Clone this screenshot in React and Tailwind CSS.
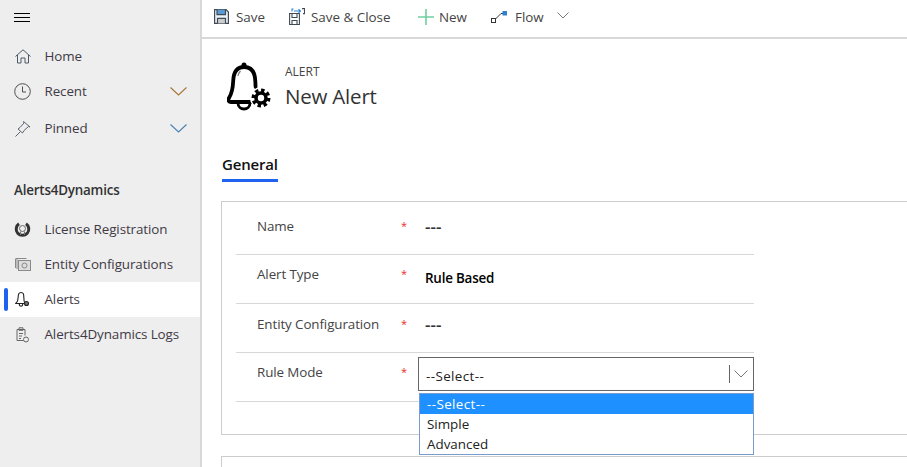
const font = { fontFamily: '"Open Sans","Noto Sans",sans-serif' };

function NavItem({ icon, label, chevron, active, h = "h-[35px]" }) {
  return (
    <div className={`relative flex items-center ${h} pl-[14px] pr-[13px] ${active ? "bg-white" : ""}`}>
      {active && <div className="absolute left-[4px] top-[6px] h-[23px] w-[4px] rounded-sm bg-[#1f62ef]" />}
      <div className="flex w-[17px] shrink-0 justify-center">{icon}</div>
      <span className="ml-[13.5px] flex-1 text-[13.4px] tracking-[-0.1px] text-[#3f3a45]">{label}</span>
      {chevron && (
        <svg width="17" height="9" viewBox="0 0 17 9" fill="none" stroke={chevron} strokeWidth="1.1"><path d="M0.5 0.5 8.5 8 16.5 0.5" /></svg>
      )}
    </div>
  );
}

const I = {
  home: (
    <svg width="16" height="15" viewBox="0 0 16 15" fill="none" stroke="#4c5a68" strokeWidth="1"><path d="M0.5 7.5 8 0.8 15.5 7.500M2.500 6v8h3.500V9h4v5h3.500V6" /></svg>
  ),
  clock: (
    <svg width="17" height="17" viewBox="0 0 17 17" fill="none" stroke="#4c5050" strokeWidth="1"><circle cx="8.500" cy="8.500" r="7.800" /><path d="M8.500 3.500v5.500h3.500" /></svg>
  ),
  pin: (
    <svg width="16" height="16" viewBox="0 0 16 16" fill="none" stroke="#5c6670" strokeWidth="1"><path d="M0.500 15.500 5.500 10.500M3 8l2-1.500 4-4.500-.5-1.500L15 6l-1.500-.5L9 9.500 7.500 12z" /></svg>
  ),
  license: (
    <svg width="17" height="15" viewBox="0 0 17 15" fill="none"><path d="M5 1.800A6.300 6.300 0 1 0 12 1.800" stroke="#333" strokeWidth="3" /><circle cx="8.500" cy="6.500" r="3" stroke="#666" strokeWidth="1" /><path d="M6.500 9.500v3.500M10.500 9.500v3.500" stroke="#777" /></svg>
  ),
  entity: (
    <svg width="16" height="13" viewBox="0 0 16 13" fill="none" stroke="#8a8a8a" strokeWidth="1"><rect x="3.500" y="2.500" width="12" height="10" fill="#ddd" /><path d="M0.500 1v9M0.500 .5h11M2 1v10" /><circle cx="9.500" cy="7.500" r="2.500" /></svg>
  ),
  bell: (
    <svg width="15" height="17" viewBox="0 0 15 17" fill="none" stroke="#222" strokeWidth="1.1"><path d="M6 1.500C3.800 1.500 3.200 3.500 3.200 6c0 3-.8 5-2.400 6.500h9.200C9 11 8.800 9 8.800 6c0-2.500-.3-4.500-2.800-4.500zM4.300 13c0 3 3.400 3 3.400 0" /><circle cx="11.500" cy="12.500" r="2" fill="#777" /></svg>
  ),
  logs: (
    <svg width="13" height="16" viewBox="0 0 13 16" fill="none" stroke="#666" strokeWidth="1"><path d="M7.500 13.500h-6.500v-11h8v6M3 .8h4v2.500h-4zM3 6.500h4M3 9h3M3 11.500h2" /><circle cx="10" cy="12.500" r="2.500" /></svg>
  ),
};

function Row({ label, h, pt, children }) {
  return (
    <div className={`flex ${h} ${pt} border-b border-[#d8d8d8]`}>
      <div className="w-[165px] pl-[21px] text-[13.4px] leading-[20px] tracking-[-0.1px] text-[#444]">{label}</div>
      <div className="w-[17px] text-[11px] leading-[20px] text-[#e6302b]">*</div>
      {children}
    </div>
  );
}

function Btn({ icon, label, cls }) {
  return (
    <div className={`flex items-center ${cls}`}>
      {icon}
      <span className="text-[13.4px] text-[#444]">{label}</span>
    </div>
  );
}

export default function App() {
  return (
    <div style={font} className="flex h-[467px] w-[907px] overflow-hidden bg-white">
      <aside className="w-[200px] shrink-0 bg-[#eeeeee]">
        <div className="flex h-[35px] items-center pl-[14px]">
          <div className="flex h-[9px] w-[16px] flex-col justify-between">
            <div className="h-px bg-black" /><div className="h-px bg-black" /><div className="h-px bg-black" />
          </div>
        </div>
        <div className="mt-[4px]">
          <NavItem icon={I.home} label="Home" />
          <NavItem icon={I.clock} label="Recent" chevron="#a5753a" />
          <NavItem icon={I.pin} label="Pinned" chevron="#4a80b5" h="h-[39px]" />
        </div>
        <div className="mt-[32px] flex h-[20px] items-center pl-[14px] text-[13.4px] font-semibold tracking-[-0.2px] text-[#333]">Alerts4Dynamics</div>
        <div className="mt-[12px]">
          <NavItem icon={I.license} label="License Registration" />
          <NavItem icon={I.entity} label="Entity Configurations" />
          <NavItem icon={I.bell} label="Alerts" active />
          <NavItem icon={I.logs} label="Alerts4Dynamics Logs" />
        </div>
      </aside>

      <main className="min-w-0 flex-1 border-l-2 border-[#d8d8d8]">
        <div className="flex h-[39px] items-center border-b-2 border-[#d8d8d8] pb-[3px] pl-[12px]">
          <Btn label="Save" cls="w-[75px]" icon={
            <svg className="mr-[7px]" width="15" height="15" viewBox="0 0 15 15" fill="none" stroke="#3f4a55" strokeWidth="1.2"><path d="M.6.6h11.400l2.400 2.400v11.400h-13.800z" fill="#eef4fa" /><path d="M3 .6v5h8.500v-5" fill="#5b9bd5" /><path d="M3.500 14.400v-5h8v5" fill="#ccc" /></svg>
          } />
          <Btn label="Save & Close" cls="w-[129px]" icon={
            <svg className="mr-[6px]" width="16" height="17" viewBox="0 0 16 17" fill="none" stroke="#3f4a55" strokeWidth="1.1"><path d="M.6 5.500h9.800v11h-9.800z" /><path d="M3 5.500v4h5v-4M3 16.500v-4h5v4" /><path d="M3 3.500v-2.500h1.500M5 3h6M9.500 1.200 11.500 3l-2 1.800" stroke="#2f80d0" /><path d="M13 .6h2.500v5H14" /></svg>
          } />
          <Btn label="New" cls="w-[73px]" icon={
            <svg className="mr-[5px]" width="16" height="16" viewBox="0 0 16 16" fill="none" stroke="#6fcf9f" strokeWidth="1.6"><path d="M8 0v16M0 8h16" /></svg>
          } />
          <Btn label="Flow" cls="" icon={
            <svg className="mr-[8px]" width="16" height="12" viewBox="0 0 16 12" fill="none" stroke="#333" strokeWidth="1"><rect x=".5" y="7.500" width="4" height="4" /><path d="M4.500 8 10 2.500H12" /><rect x="12" y=".5" width="3.500" height="3.500" fill="#2f80d0" stroke="#2f80d0" /></svg>
          } />
          <svg className="mb-[3px] ml-[13px]" width="12" height="7" viewBox="0 0 12 7" fill="none" stroke="#777" strokeWidth="1"><path d="M.5.5 6 6 11.500.5" /></svg>
        </div>

        <div className="flex pl-[25px] pt-[23px]">
          <svg width="45" height="50" viewBox="0 0 45 50" fill="none" stroke="#000" strokeWidth="3.800">
            <circle cx="17" cy="3" r="2.500" fill="#000" stroke="none" />
            <path d="M17 5C9 5 6.500 11 6.200 19c-.3 7-1 12-4.200 17-1.500 2.500 0 4 2 4h23M17 5c8 0 11 6 11.300 14l.3 6" strokeLinecap="round" />
            <path d="M11 41c0 8 12 8 12 0" strokeWidth="2.800" />
            <path d="M11 14c.4-2 1-3.500 2.500-5" strokeWidth="1.200" stroke="#777" />
            <circle cx="34" cy="36" r="11" fill="#fff" stroke="none" />
            <circle cx="34" cy="36" r="7.800" strokeWidth="3.400" strokeDasharray="3.400 2.700" />
            <circle cx="34" cy="36" r="5" strokeWidth="3.600" fill="#fff" />
          </svg>
          <div className="ml-[13px]">
            <div className="mt-[2px] text-[12px] leading-[16px] text-[#444]">ALERT</div>
            <div className="mt-[2px] text-[20.5px] leading-[28px] tracking-[-0.2px] text-[#333]">New Alert</div>
          </div>
        </div>

        <div className="ml-[20px] mt-[42px] inline-block border-b-[3px] border-[#1f62ef] pb-[5px] text-[15px] font-semibold leading-[20px] tracking-[-0.2px] text-[#111]">General</div>

        <div className="ml-[19px] mt-[19px] h-[234px] border border-r-0 border-[#cccccc] pl-[14px]">
          <div className="w-[518px]">
            <Row label="Name" h="h-[53px]" pt="pt-[14px]">
              <div className="pl-[7px] pt-[1px] text-[17px] font-semibold leading-[20px] text-[#333]">---</div>
            </Row>
            <Row label="Alert Type" h="h-[49px]" pt="pt-[9px]">
              <div className="pl-[7px] pt-[4px] text-[13.4px] font-semibold leading-[20px] tracking-[-0.2px] text-black">Rule Based</div>
            </Row>
            <Row label="Entity Configuration" h="h-[49px]" pt="pt-[10px]">
              <div className="pl-[7px] pt-[1px] text-[17px] font-semibold leading-[20px] text-[#333]">---</div>
            </Row>
            <Row label="Rule Mode" h="h-[49px]" pt="pt-[9px]">
              <div className="relative -mt-[5px]">
                <div className="flex h-[34px] w-[336px] items-center border border-[#666] pl-[7px] text-[13.4px] tracking-[0.4px] text-[#222]">
                  <span className="flex-1 pt-[4px]">--Select--</span>
                  <div className="h-[18px] w-px bg-[#666]" />
                  <svg className="ml-[4px] mr-[5px]" width="14" height="8" viewBox="0 0 14 8" fill="none" stroke="#777" strokeWidth="1"><path d="M.5.5 7 7 13.500.5" /></svg>
                </div>
                <div className="absolute left-px top-[36px] z-10 w-[335px] border border-[#7a9bd0] bg-white text-[13.4px] leading-[20px] text-[#222]">
                  <div className="bg-[#1e90ff] pl-[7px] tracking-[0.4px] text-white">--Select--</div>
                  <div className="pl-[7px]">Simple</div>
                  <div className="pl-[7px]">Advanced</div>
                </div>
              </div>
            </Row>
          </div>
        </div>
        <div className="ml-[19px] mt-[21px] h-[20px] border border-b-0 border-r-0 border-[#cccccc]" />
      </main>
    </div>
  );
}
